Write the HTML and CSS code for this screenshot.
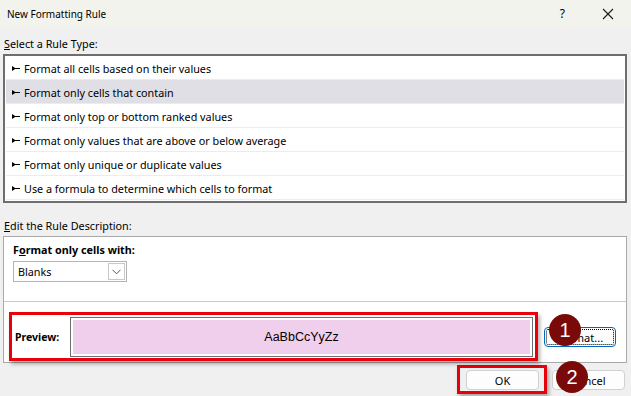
FILE: index.html
```html
<!DOCTYPE html>
<html lang="en">
<head>
    <meta charset="UTF-8">
    <title>New Formatting Rule</title>
    <link rel="stylesheet" href="styles.css">
</head>
<body>
    <div class="dialog">
        <div class="titlebar">
            <div class="title">New Formatting Rule</div>
            <div class="title-btns">
                <span class="help">?</span>
                <svg class="close" width="12" height="12" viewBox="0 0 12 12"><path d="M1 1 L11 11 M11 1 L1 11" stroke="#1a1a1a" stroke-width="1.1"/></svg>
            </div>
        </div>

        <div class="content">
            <div class="group-label"><u>S</u>elect a Rule Type:</div>
            <div class="rule-list">
                <div class="rule"><span class="arrow"></span>Format all cells based on their values</div>
                <div class="rule selected"><span class="arrow"></span>Format only cells that contain</div>
                <div class="rule"><span class="arrow"></span>Format only top or bottom ranked values</div>
                <div class="rule"><span class="arrow"></span>Format only values that are above or below average</div>
                <div class="rule"><span class="arrow"></span>Format only unique or duplicate values</div>
                <div class="rule"><span class="arrow"></span>Use a formula to determine which cells to format</div>
            </div>

            <div class="group-label desc-label"><u>E</u>dit the Rule Description:</div>
            <div class="desc-box">
                <div class="desc-top">
                    <div class="bold">F<u>o</u>rmat only cells with:</div>
                    <div class="select">
                        <span>Blanks</span>
                        <span class="drop">
                            <svg width="9" height="6" viewBox="0 0 9 6"><path d="M0.5 0.8 L4.5 4.8 L8.5 0.8" fill="none" stroke="#555" stroke-width="1"/></svg>
                        </span>
                    </div>
                </div>
                <div class="preview-row">
                    <div class="preview-frame">
                        <span class="bold">Preview:</span>
                        <div class="preview-box">
                            <div class="preview-fill">AaBbCcYyZz</div>
                        </div>
                    </div>
                    <button class="btn format-btn"><span class="focus">Format...</span></button>
                    <span class="badge badge-1">1</span>
                </div>
            </div>

            <div class="footer">
                <div class="ok-frame">
                    <button class="btn">OK</button>
                </div>
                <button class="btn cancel-btn">Cancel</button>
                <span class="badge badge-2">2</span>
            </div>
        </div>
    </div>
</body>
</html>
```

FILE: styles.css
```css
:root {
    --body-bg: #f0f0f0;
    --title-bg: #f3f3ee;
    --text: #000;
    --border: #a9a9a9;
    --list-border: #6e6e70;
    --hilite: #e0dfe5;
    --red: #e8000b;
    --badge: #7a0a0a;
    --pink: #f0cfec;
}

* { box-sizing: border-box; margin: 0; padding: 0; }

body {
    font-family: 'Noto Sans', 'Open Sans', sans-serif;
    font-size: 10.8px;
    color: var(--text);
    background: var(--body-bg);
    width: 631px;
    height: 396px;
    overflow: hidden;
}

.dialog {
    display: flex;
    flex-direction: column;
    height: 396px;
}

.titlebar {
    height: 27px;
    background: var(--title-bg);
    display: flex;
    justify-content: space-between;
    align-items: center;
    padding-left: 7px;
}

.title {
    font-size: 10px;
}

.title-btns {
    display: flex;
    align-items: center;
    gap: 37px;
    padding-right: 17px;
}

.help {
    font-size: 12px;
}

.content {
    padding: 0 4px 0 3px;
    display: flex;
    flex-direction: column;
    position: relative;
}

.group-label {
    height: 27px;
    padding: 9px 0 0 1px;
    line-height: 16px;
}

.rule-list {
    height: 149px;
    background: #fff;
    border: 2px solid var(--list-border);
    padding: 0 1px;
}

.rule {
    height: 24px;
    display: flex;
    align-items: center;
    padding: 2px 0 0 6px;
    border-bottom: 1px solid #ececec;
}

.rule.selected {
    background: var(--hilite);
}

.arrow {
    width: 8px;
    height: 5px;
    margin-right: 4px;
    background: #000;
    clip-path: polygon(0 0, 40% 40%, 100% 40%, 100% 60%, 40% 60%, 0 100%);
}

.desc-label {
    height: 33px;
    padding-top: 15px;
}

.desc-box {
    height: 127px;
    background: #fff;
    border: 1px solid var(--border);
    display: flex;
    flex-direction: column;
    position: relative;
}

.desc-top {
    height: 65px;
    padding: 5px 0 0 9px;
    border-bottom: 1px solid #c9c9c9;
    display: flex;
    flex-direction: column;
    gap: 4px;
}

.bold {
    font-weight: bold;
}

.select {
    width: 114px;
    height: 21px;
    border: 1px solid #b4b4b4;
    display: flex;
    justify-content: space-between;
    align-items: center;
    padding: 0 1px 0 4px;
}

.drop {
    width: 17px;
    height: 17px;
    border: 1px solid #c8c8c8;
    display: flex;
    align-items: center;
    justify-content: center;
}

.preview-row {
    display: flex;
    align-items: center;
    padding: 10px 0 0 5px;
    gap: 6px;
}

.preview-frame {
    width: 529px;
    height: 49px;
    border: 3px solid var(--red);
    box-shadow: 2px 3px 4px rgba(0, 0, 0, 0.3);
    display: flex;
    align-items: center;
    padding: 0 2px 0 3px;
}

.preview-frame .bold {
    width: 55px;
    font-size: 10.5px;
}

.preview-box {
    flex-grow: 1;
    height: 40px;
    border: 1px solid #6e6e6e;
    padding: 2px;
}

.preview-fill {
    height: 100%;
    background: var(--pink);
    display: flex;
    align-items: center;
    justify-content: center;
    font-family: 'Liberation Sans', sans-serif;
    font-size: 12.5px;
}

.btn {
    font-family: inherit;
    font-size: 11px;
    background: #fdfdfd;
    border: 1px solid #d0d0d0;
    border-radius: 4px;
    height: 20px;
    color: #000;
}

.format-btn {
    width: 72px;
    border: 1px solid #0067c0;
    padding: 1px;
    margin-top: 1px;
}

.focus {
    display: flex;
    align-items: center;
    justify-content: center;
    height: 100%;
    border: 1px dotted #000;
    border-radius: 2px;
}

.footer {
    display: flex;
    align-items: center;
    padding: 2px 0 0 454px;
    gap: 5px;
}

.ok-frame {
    border: 3px solid var(--red);
    box-shadow: 2px 3px 4px rgba(0, 0, 0, 0.3);
    padding: 2px 5px 1px 6px;
}

.ok-frame .btn {
    width: 73px;
}

.cancel-btn {
    width: 73px;
    margin-top: 1px;
}

.badge {
    position: absolute;
    width: 32px;
    height: 32px;
    border-radius: 50%;
    background: var(--badge);
    color: #fff;
    font-family: 'Liberation Sans', sans-serif;
    font-size: 20px;
    display: flex;
    align-items: center;
    justify-content: center;
}

.badge-1 {
    left: 545px;
    top: 77px;
}

.badge-2 {
    left: 556px;
    top: 334px;
}
```
